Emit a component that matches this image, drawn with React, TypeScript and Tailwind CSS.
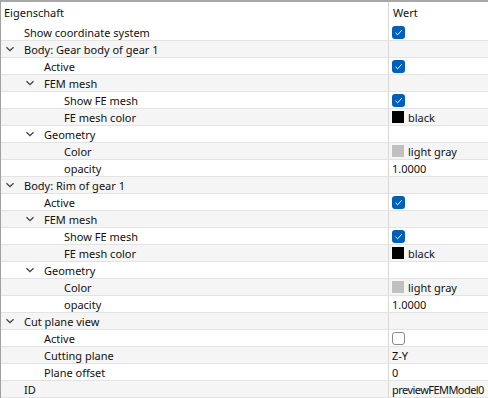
import React from "react";

type Row = {
  label: string;
  level: number;
  expander?: boolean;
  value?: { kind: "check"; checked: boolean } | { kind: "color"; color: string; text: string } | { kind: "text"; text: string; tight?: boolean };
};

const rows: Row[] = [
  { label: "Show coordinate system", level: 0, value: { kind: "check", checked: true } },
  { label: "Body: Gear body of gear 1", level: 0, expander: true },
  { label: "Active", level: 1, value: { kind: "check", checked: true } },
  { label: "FEM mesh", level: 1, expander: true },
  { label: "Show FE mesh", level: 2, value: { kind: "check", checked: true } },
  { label: "FE mesh color", level: 2, value: { kind: "color", color: "#000000", text: "black" } },
  { label: "Geometry", level: 1, expander: true },
  { label: "Color", level: 2, value: { kind: "color", color: "#c0c0c0", text: "light gray" } },
  { label: "opacity", level: 2, value: { kind: "text", text: "1.0000" } },
  { label: "Body: Rim of gear 1", level: 0, expander: true },
  { label: "Active", level: 1, value: { kind: "check", checked: true } },
  { label: "FEM mesh", level: 1, expander: true },
  { label: "Show FE mesh", level: 2, value: { kind: "check", checked: true } },
  { label: "FE mesh color", level: 2, value: { kind: "color", color: "#000000", text: "black" } },
  { label: "Geometry", level: 1, expander: true },
  { label: "Color", level: 2, value: { kind: "color", color: "#c0c0c0", text: "light gray" } },
  { label: "opacity", level: 2, value: { kind: "text", text: "1.0000" } },
  { label: "Cut plane view", level: 0, expander: true },
  { label: "Active", level: 1, value: { kind: "check", checked: false } },
  { label: "Cutting plane", level: 1, value: { kind: "text", text: "Z-Y" } },
  { label: "Plane offset", level: 1, value: { kind: "text", text: "0" } },
  { label: "ID", level: 0, value: { kind: "text", text: "previewFEMModel0", tight: true } },
];

function Chevron() {
  return (
    <svg width="10" height="10" viewBox="0 0 10 10" className="shrink-0">
      <path d="M1.5 3.2 L5 6.7 L8.5 3.2" fill="none" stroke="#404040" strokeWidth="1.3" />
    </svg>
  );
}

function Check({ checked }: { checked: boolean }) {
  if (!checked) {
    return <div className="w-[13px] h-[13px] rounded-[3px] border border-[#8a8a8a] bg-white" />;
  }
  return (
    <div className="w-[13px] h-[13px] rounded-[3px] bg-[#005fb8] flex items-center justify-center">
      <svg width="9" height="9" viewBox="0 0 9 9">
        <path d="M1.5 4.8 L3.6 6.8 L7.6 2.4" fill="none" stroke="white" strokeWidth="1" />
      </svg>
    </div>
  );
}

export default function App() {
  return (
    <div
      className="w-[488px] h-[398px] bg-white overflow-hidden text-[11px] text-[#111] border-l border-[#a0a0a0]"
      style={{ fontFamily: "'Noto Sans', 'Liberation Sans', sans-serif" }}
    >
      <div className="flex h-[24px] border-t-2 border-[#a8a8a8] items-center">
        <div className="w-[388px] shrink-0 h-full flex items-center pl-[3px] border-r border-[#d8d8d8]">Eigenschaft</div>
        <div className="flex-1 min-w-0 pl-[4px]">Wert</div>
      </div>
      {rows.map((r, i) => (
        <div
          key={i}
          className={`flex h-[17px] border-b border-[#e3e3e3] ${i % 2 === 1 ? "bg-[#f5f5f5]" : "bg-white"}`}
        >
          <div className="w-[388px] shrink-0 h-full flex items-center border-r border-[#d8d8d8]">
            <div style={{ width: 4 + r.level * 20 }} className="shrink-0" />
            <div className="w-[19px] shrink-0 flex items-center">{r.expander ? <Chevron /> : null}</div>
            <span className="leading-none whitespace-nowrap">{r.label}</span>
          </div>
          <div className="flex-1 min-w-0 h-full flex items-center pl-[3px] whitespace-nowrap">
            {r.value?.kind === "check" && <Check checked={r.value.checked} />}
            {r.value?.kind === "color" && (
              <div className="flex items-center gap-[4px]">
                <div className="w-[12px] h-[12px]" style={{ background: r.value.color }} />
                <span className="leading-none">{r.value.text}</span>
              </div>
            )}
            {r.value?.kind === "text" && (
              <span className={`leading-none ${r.value.tight ? "tracking-[-0.55px]" : ""}`}>{r.value.text}</span>
            )}
          </div>
        </div>
      ))}
    </div>
  );
}
